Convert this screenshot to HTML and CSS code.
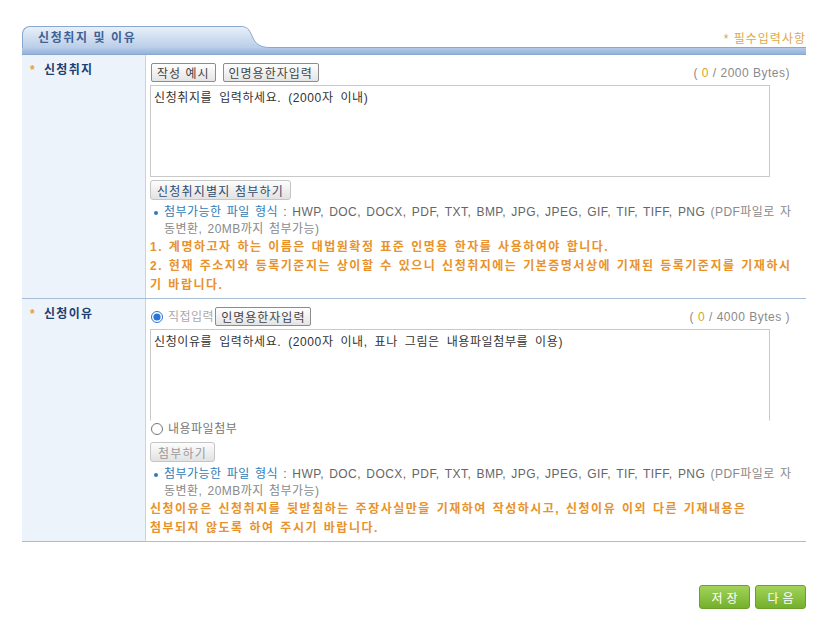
FILE: index.html
```html
<!DOCTYPE html>
<html lang="ko">
<head>
  <meta charset="UTF-8">
  <meta name="viewport" content="width=device-width, initial-scale=1.0">
  <title>신청취지 및 이유</title>
  <link rel="stylesheet" href="styles.css">
</head>
<body>
  <div id="apply">
    <div class="sec-head">
      <div class="tab">신청취지 및 이유</div>
      <svg class="tab-curve" width="32" height="22" viewBox="0 0 32 22">
        <defs>
          <linearGradient id="tabGrad" x1="0" y1="0" x2="0" y2="1">
            <stop offset="0" stop-color="#e9f0f9"/>
            <stop offset="1" stop-color="#b9cde8"/>
          </linearGradient>
        </defs>
        <path d="M0 0.5 H3 C11 0.5 12 6 15 12 C18 18 22 21.5 32 21.5 V22 H0 Z" fill="url(#tabGrad)"/>
        <path d="M0 0.5 H3 C11 0.5 12 6 15 12 C18 18 22 21.5 32 21.5" fill="none" stroke="#8aa8cf"/>
      </svg>
      <div class="head-line"><span class="req">* 필수입력사항</span></div>
    </div>
    <div class="head-bar"></div>

    <div class="form-row">
      <div class="label"><span class="star">*</span>신청취지</div>
      <div class="field">
        <div class="tool-row">
          <div class="btns">
            <button class="btn">작성 예시</button>
            <button class="btn">인명용한자입력</button>
          </div>
          <span class="bytes">( <em>0</em> / 2000 Bytes)</span>
        </div>
        <textarea class="memo">신청취지를 입력하세요. (2000자 이내)</textarea>
        <button class="btn-file">신청취지별지 첨부하기</button>
        <ul class="file-info">
          <li><b>첨부가능한 파일 형식</b> : HWP, DOC, DOCX, PDF, TXT, BMP, JPG, JPEG, GIF, TIF, TIFF, PNG <span>(PDF파일로 자<br>동변환, 20MB까지 첨부가능)</span></li>
        </ul>
        <p class="notice">1. 계명하고자 하는 이름은 대법원확정 표준 인명용 한자를 사용하여야 합니다.<br>2. 현재 주소지와 등록기준지는 상이할 수 있으니 신청취지에는 기본증명서상에 기재된 등록기준지를 기재하시<br>기 바랍니다.</p>
      </div>
    </div>

    <div class="form-row">
      <div class="label"><span class="star">*</span>신청이유</div>
      <div class="field">
        <div class="tool-row">
          <div class="btns">
            <label class="radio off"><input type="radio" name="reason" checked>직접입력</label>
            <button class="btn">인명용한자입력</button>
          </div>
          <span class="bytes">( <em>0</em> / 4000 Bytes )</span>
        </div>
        <textarea class="memo open">신청이유를 입력하세요. (2000자 이내, 표나 그림은 내용파일첨부를 이용)</textarea>
        <label class="radio"><input type="radio" name="reason">내용파일첨부</label>
        <button class="btn-file disabled">첨부하기</button>
        <ul class="file-info">
          <li><b>첨부가능한 파일 형식</b> : HWP, DOC, DOCX, PDF, TXT, BMP, JPG, JPEG, GIF, TIF, TIFF, PNG <span>(PDF파일로 자<br>동변환, 20MB까지 첨부가능)</span></li>
        </ul>
        <p class="notice">신청이유은 신청취지를 뒷받침하는 주장사실만을 기재하여 작성하시고, 신청이유 이외 다른 기재내용은<br>첨부되지 않도록 하여 주시기 바랍니다.</p>
      </div>
    </div>

    <div class="actions">
      <button class="btn-green">저장</button>
      <button class="btn-green">다음</button>
    </div>
  </div>
</body>
</html>
```

FILE: styles.css
```css
body {
  margin: 0;
  background: #fff;
  font-family: "Liberation Sans", "Noto Sans CJK KR", sans-serif;
  font-size: 12px;
  color: #333;
}

#apply {
  width: 784px;
  margin: 26px 0 0 22px;
}

/* section header with tab */
.sec-head {
  display: flex;
  height: 22px;
}

.tab {
  width: 200px;
  height: 21px;
  padding-left: 15px;
  border-top: 1px solid #8aa8cf;
  border-left: 1px solid #8aa8cf;
  border-radius: 8px 0 0 0;
  background: linear-gradient(#e9f0f9, #b9cde8);
  font-weight: bold;
  color: #3e6296;
  line-height: 23px;
  letter-spacing: 1.6px;
}

.tab-curve {
  display: block;
  flex: none;
}

.head-line {
  flex: 1;
  height: 21px;
  border-bottom: 1px solid #8aa8cf;
  display: flex;
  justify-content: flex-end;
  align-items: center;
}

.req {
  color: #dca848;
  font-size: 12px;
  letter-spacing: 1px;
  margin-top: 2px;
}

.head-bar {
  height: 6px;
  background: linear-gradient(#b5cae7, #94b2da);
  border-bottom: 1px solid #8aa8cf;
}

/* rows */
.form-row {
  display: grid;
  grid-template-columns: 124px 1fr;
  border-bottom: 1px solid #a9bdd6;
}

.label {
  background: #edf3fb;
  border-right: 1px solid #c4d4e8;
  padding: 7px 0 0 8px;
  font-weight: bold;
  color: #1d3f73;
  line-height: 16px;
  letter-spacing: 1.3px;
}

.star {
  color: #e8a03a;
  margin-right: 8px;
}

.field {
  padding: 8px 8px 3px 4px;
}

.tool-row {
  display: flex;
  justify-content: space-between;
  align-items: center;
  height: 19px;
  margin-bottom: 3px;
}

.btns {
  display: flex;
  align-items: center;
}

.btn {
  height: 19px;
  margin: 0 6px 0 1px;
  padding: 0 5px;
  border: 1px solid #8c8c8c;
  border-radius: 2px;
  background: linear-gradient(#fff, #e4e4e4);
  font-family: "Noto Sans CJK KR", sans-serif;
  font-size: 12px;
  line-height: 16px;
  color: #444;
  letter-spacing: 1px;
}

.bytes {
  color: #8a8a8a;
  margin-right: 8px;
  letter-spacing: 0.5px;
}

.bytes em {
  font-style: normal;
  color: #d6a52a;
}

.memo {
  display: block;
  box-sizing: border-box;
  width: 620px;
  height: 92px;
  margin: 0;
  padding: 4px 3px;
  border: 1px solid #c9c9c9;
  resize: none;
  font-family: "Liberation Sans", "Noto Sans CJK KR", sans-serif;
  font-size: 12px;
  line-height: 16px;
  color: #333;
  letter-spacing: 0.6px;
  word-spacing: 3px;
}

.memo.open {
  border-bottom-color: #fff;
}

.btn-file {
  display: block;
  height: 20px;
  margin-top: 3px;
  padding: 0 6px;
  border: 1px solid #c5c5c5;
  border-radius: 3px;
  background: linear-gradient(#fdfdfd, #e2e2e2);
  font-family: "Noto Sans CJK KR", sans-serif;
  font-size: 12px;
  line-height: 17px;
  color: #2d4b70;
  letter-spacing: 1.2px;
}

.btn-file.disabled {
  padding: 0 7px;
  color: #999;
  margin-top: 5px;
}

.radio {
  display: flex;
  align-items: center;
  height: 16px;
  color: #777;
  line-height: 16px;
  letter-spacing: 0.5px;
}

.radio.off {
  color: #aaa;
}

.radio input {
  width: 12px;
  height: 12px;
  margin: 0 5px 0 1px;
  accent-color: #2a74d8;
}

.file-info {
  list-style: none;
  margin: 4px 0 0;
  padding: 0;
}

.file-info li {
  position: relative;
  padding-left: 14px;
  line-height: 17px;
  color: #666;
  white-space: nowrap;
  letter-spacing: 0.45px;
  word-spacing: 1.5px;
}

.file-info li::before {
  content: "";
  position: absolute;
  left: 4px;
  top: 7px;
  width: 4px;
  height: 4px;
  border-radius: 50%;
  background: #2f7db8;
}

.file-info b {
  font-weight: normal;
  color: #2f7db8;
}

.file-info span {
  color: #8a8a8a;
}

.notice {
  margin: 0;
  color: #e8922b;
  font-weight: bold;
  line-height: 19px;
  letter-spacing: 1.5px;
  word-spacing: 1px;
  white-space: nowrap;
}

/* bottom buttons */
.actions {
  display: flex;
  justify-content: flex-end;
  gap: 5px;
  margin-top: 43px;
}

.btn-green {
  width: 51px;
  height: 24px;
  padding: 0 0 0 4px;
  border: 1px solid #6a9f2a;
  border-radius: 3px;
  background: linear-gradient(#a2d35a, #74b02c);
  font-family: "Noto Sans CJK KR", sans-serif;
  font-size: 12px;
  color: #fff;
  letter-spacing: 4px;
}
```
